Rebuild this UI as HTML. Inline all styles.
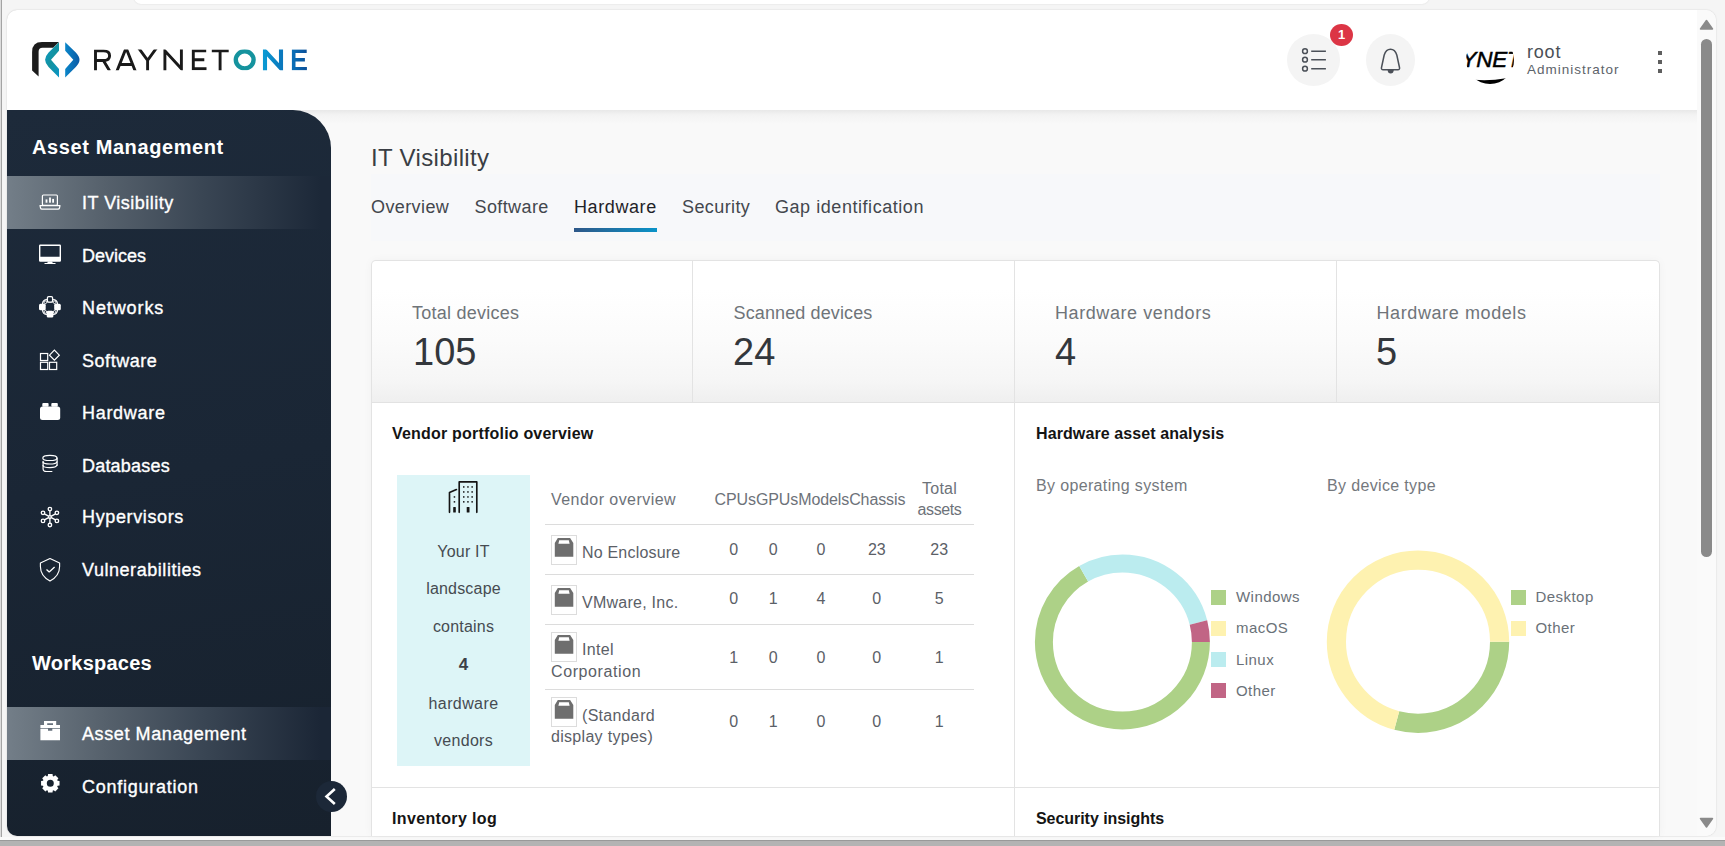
<!DOCTYPE html>
<html><head><meta charset="utf-8">
<style>
*{box-sizing:border-box;margin:0;padding:0}
html,body{width:1725px;height:846px;overflow:hidden}
body{position:relative;background:#f5f5f5;font-family:"Liberation Sans",sans-serif;color:#3b3f45}
.a{position:absolute}
.t{position:absolute;white-space:nowrap}
.sb .t{color:#fff;font-size:18px;line-height:18px;left:82px;letter-spacing:.35px;-webkit-text-stroke:.35px #fff}
.sb .h{font-weight:700;font-size:20px;line-height:20px;left:32px;letter-spacing:.6px;-webkit-text-stroke:0}
.sb svg{position:absolute}
.tab{font-size:18px;line-height:18px;top:198px;color:#43474d;letter-spacing:.4px}
.lbl{font-size:18px;line-height:18px;color:#6f7479;top:304px;letter-spacing:.25px}
.num{font-size:38px;line-height:38px;color:#33373c;top:333px}
.ct{font-size:16px;line-height:16px;font-weight:700;color:#141414;letter-spacing:.2px}
.sub{font-size:16px;line-height:16px;color:#74787d;letter-spacing:.35px}
.td{font-size:16px;line-height:16px;color:#5b6067;letter-spacing:.2px}
.dg{font-size:16px;line-height:16px;color:#5b6067;text-align:center;width:40px}
.lg{font-size:15px;line-height:15px;color:#6a7178;letter-spacing:.45px}
.sq{position:absolute;width:15px;height:15px}
.bx{left:397px;width:133px;text-align:center;color:#464b51}
</style></head><body>
<!-- browser chrome bits -->
<div class="a" style="left:0;top:0;width:1px;height:846px;background:#dcdcdc"></div>
<div class="a" style="left:1px;top:0;width:1px;height:846px;background:#a4a4a4"></div>
<div class="a" style="left:134px;top:-10px;width:1295px;height:14px;background:#fff;border-radius:9px;box-shadow:0 0 2px rgba(0,0,0,.12)"></div>
<div class="a" style="left:0;top:837px;width:1725px;height:3px;background:#fafafa"></div><div class="a" style="left:0;top:840px;width:1725px;height:1px;background:#9a9a9a"></div><div class="a" style="left:0;top:841px;width:1725px;height:5px;background:#b3b3b3"></div>
<!-- card -->
<div class="a" style="left:7px;top:10px;width:1709px;height:826px;background:#fff;border-radius:10px;box-shadow:0 0 1.5px rgba(0,0,0,.22)"></div>
<!-- main bg -->
<div class="a" style="left:7px;top:110px;width:1690px;height:726px;background:#f9f9f9;border-bottom-left-radius:10px"></div>
<div class="a" style="left:7px;top:110px;width:1690px;height:14px;background:linear-gradient(#e8e8e8,#f3f3f3 35%,#f9f9f9)"></div>
<div class="a" style="left:371px;top:174px;width:1289px;height:67px;background:#f7f8fa"></div>
<!-- scrollbar -->
<div class="a" style="left:1697px;top:10px;width:19px;height:826px;background:#fafafa;border-radius:0 10px 10px 0"></div>
<div class="a" style="left:1701px;top:39px;width:11px;height:518px;background:#8a8a8a;border-radius:6px"></div>
<svg class="a" style="left:1697px;top:15px" width="19" height="20"><path d="M3.5 14 L9.5 5.5 L15.5 14 Z" fill="#8a8a8a" stroke="#8a8a8a" stroke-width="1.5" stroke-linejoin="round"/></svg>
<svg class="a" style="left:1697px;top:813px" width="19" height="20"><path d="M3.5 5.5 L9.5 14 L15.5 5.5 Z" fill="#8a8a8a" stroke="#8a8a8a" stroke-width="1.5" stroke-linejoin="round"/></svg>

<!-- HEADER -->
<svg class="a" style="left:25px;top:35px" width="60" height="50" viewBox="0 0 60 50">
<defs><linearGradient id="gT" x1="0" y1="0" x2="1" y2="1"><stop offset="0" stop-color="#0b9bc9"/><stop offset=".5" stop-color="#13929f"/><stop offset="1" stop-color="#0a96c8"/></linearGradient>
<linearGradient id="gB" x1="0" y1="0" x2="1" y2="0"><stop offset="0" stop-color="#0a86c9"/><stop offset="1" stop-color="#0b5aa5"/></linearGradient></defs>
<path d="M7.1 35.5 L7.1 17 Q7.1 7.1 17 7.1 L34 7.1 L28.2 12.7 L17.5 12.7 Q13.6 12.7 13.6 16.8 L13.6 41.4 Z" fill="#1c1c1c"/>
<path d="M34 7.3 L34 15.7 L26 24.8 L34 34 L34 42.6 L23.6 31.9 Q20.1 28.4 20.1 24.8 Q20.1 21.2 23.6 17.4 Z" fill="url(#gT)"/>
<path d="M40.2 7.3 L40.2 15.7 L48.3 24.8 L40.2 34 L40.2 42.6 L50.8 31.9 Q54.5 28.4 54.5 24.8 Q54.5 21.2 50.8 17.4 Z" fill="url(#gB)"/>
</svg>
<svg class="a" style="left:85px;top:40px" width="230" height="40" viewBox="85 40 230 40">
<defs><clipPath id="cp"><rect x="85" y="49.4" width="230" height="20.8"/></clipPath>
<linearGradient id="gN" x1="0" y1="0" x2="1" y2="0"><stop offset="0" stop-color="#0a98d2"/><stop offset="1" stop-color="#0a78bd"/></linearGradient>
<linearGradient id="gE" x1="0" y1="0" x2="1" y2="0"><stop offset="0" stop-color="#0a6db6"/><stop offset="1" stop-color="#0b4f98"/></linearGradient></defs>
<g clip-path="url(#cp)" fill="none" stroke="#1a1a1a" stroke-width="2.9" stroke-linejoin="miter">
<path d="M95.5 72 L95.5 50.85 L103.5 50.85 Q109.6 50.85 109.6 55.7 Q109.6 60.5 103.5 60.5 L95.5 60.5 M103.4 60.5 L109.7 71"/>
<path d="M116.6 72 L126.1 48 L135.6 72 M119.5 64.5 L132.6 64.5"/>
<path d="M138.6 48 L147.6 60.3 L156.5 48 M147.6 60 L147.6 72"/>
<path d="M164.9 72 L164.9 50.85 L181.4 68.8 L181.4 48"/>
<path d="M206.2 50.85 L193.3 50.85 L193.3 68.75 L206.5 68.75 M193.3 59.8 L204.3 59.8"/>
<path d="M211.8 50.85 L228.7 50.85 M220.1 50.85 L220.1 72"/>
</g>
<g clip-path="url(#cp)" fill="none" stroke-linejoin="miter">
<ellipse cx="244.7" cy="59.85" rx="8.9" ry="8.55" stroke="#15939e" stroke-width="4.4"/>
<path d="M265 72 L265 51 L281 68.5 L281 48" stroke="url(#gN)" stroke-width="4.1"/>
<path d="M306.7 51.1 L293.7 51.1 L293.7 68.7 L306.9 68.7 M293.7 59.7 L304.9 59.7" stroke="url(#gE)" stroke-width="3.6"/>
</g></svg>
<div class="a" style="left:1287px;top:34px;width:53px;height:52px;border-radius:50%;background:#f4f4f4"></div>
<svg class="a" style="left:1287px;top:34px" width="53" height="52"><g fill="none" stroke="#4b5058"><circle cx="18" cy="17.2" r="2.4" stroke-width="1.5"/><circle cx="18" cy="25.7" r="2.4" stroke-width="1.5"/><circle cx="18" cy="34.7" r="2.4" stroke-width="1.5"/><path d="M24.2 17.2 H38.9 M24.2 25.7 H38.9 M24.2 34.7 H38.9" stroke-width="1.6"/></g></svg>
<div class="a" style="left:1330px;top:24px;width:23px;height:22px;border-radius:50%;background:#dc3545"></div>
<div class="t" style="left:1330px;top:28px;width:23px;text-align:center;color:#fff;font-weight:700;font-size:13px;line-height:13px">1</div>
<div class="a" style="left:1366px;top:34px;width:49px;height:52px;border-radius:50%;background:#f4f4f4"></div>
<svg class="a" style="left:1366px;top:34px" width="49" height="52"><path d="M15.5 33.5 L18.2 21 Q20 15.3 24.5 15.3 Q29 15.3 30.8 21 L33.5 33.5 Q34 35.7 31.8 35.7 L17.2 35.7 Q15 35.7 15.5 33.5 Z" fill="none" stroke="#4b5058" stroke-width="1.5" stroke-linejoin="round"/><path d="M21.6 36 Q21.9 39.5 24.7 39.5 Q27.5 39.5 27.8 36 Z" fill="#4b5058"/></svg>
<svg class="a" style="left:1466px;top:36px" width="48" height="48" viewBox="0 0 48 48"><defs><clipPath id="av"><circle cx="24" cy="24" r="24"/></clipPath></defs>
<g clip-path="url(#av)"><rect width="48" height="48" fill="#fff"/>
<text x="-4.6" y="30.9" font-family="Liberation Sans" font-weight="400" font-style="italic" font-size="22.5" fill="#000" stroke="#000" stroke-width="0.5" letter-spacing="-.2">YNET</text>
<path d="M8 43.8 Q24 45.2 40 42.2 L40 50 L8 50 Z" fill="#000"/></g></svg>
<div class="t" style="left:1527px;top:43px;font-size:18px;line-height:18px;color:#4a4f56;letter-spacing:.8px">root</div>
<div class="t" style="left:1527px;top:63.3px;font-size:13.5px;line-height:13.5px;color:#5d636a;letter-spacing:1px">Administrator</div>
<div class="a" style="left:1658px;top:51px;width:4px;height:4px;background:#5e5e5e"></div>
<div class="a" style="left:1658px;top:60px;width:4px;height:4px;background:#5e5e5e"></div>
<div class="a" style="left:1658px;top:69px;width:4px;height:4px;background:#5e5e5e"></div>


<!-- SIDEBAR -->
<div class="sb">
<div class="a" style="left:7px;top:110px;width:324px;height:726px;background:linear-gradient(170deg,#1d2a3a 0%,#1a2635 50%,#17212d 100%);border-top-right-radius:38px;border-bottom-left-radius:10px"></div>
<div class="a" style="left:7px;top:176px;width:324px;height:53px;background:linear-gradient(90deg,#737e88 0%,#56616c 30%,#3a4654 60%,#1c2838 97%)"></div>
<div class="a" style="left:7px;top:707px;width:324px;height:53px;background:linear-gradient(90deg,#737e88 0%,#56616c 30%,#3a4654 60%,#1b2636 97%)"></div>

<svg class="a" style="left:0;top:0;pointer-events:none" width="340" height="846" viewBox="0 0 340 846">
<g fill="none" stroke="#fff" stroke-width="1.2">
<!-- laptop -->
<rect x="42.4" y="195" width="15" height="10.3" rx="1"/>
<path d="M40 205.6 H60 L59.5 208 Q59.2 209.2 58 209.2 H42 Q40.8 209.2 40.5 208 Z" stroke-linejoin="round"/>
</g>
<g fill="#fff"><rect x="45.6" y="199.4" width="1.8" height="3.3"/><rect x="49.1" y="197.5" width="1.8" height="5.2"/><rect x="52.2" y="198.9" width="1.8" height="3.8"/></g>
<!-- monitor -->
<path d="M39 245.8 Q39 244.6 40.2 244.6 H59.8 Q61 244.6 61 245.8 V260.5 Q61 261.7 59.8 261.7 H40.2 Q39 261.7 39 260.5 Z M40.4 246 V256.7 H59.6 V246 Z" fill="#fff" fill-rule="evenodd"/>
<path d="M48 261.5 L47.2 263 H44.5 V264 H55.5 V263 H52.8 L52 261.5 Z" fill="#fff"/>
<!-- network -->
<rect x="42.6" y="299.6" width="14.8" height="14.8" rx="4.2" fill="none" stroke="#fff" stroke-width="1.3"/>
<g fill="none" stroke="rgba(255,255,255,.45)" stroke-width=".8"><rect x="45.5" y="302.5" width="9" height="9"/></g>
<g fill="#1b2837" stroke="#fff" stroke-width=".9"><circle cx="45.4" cy="302.3" r="1.3"/><circle cx="54.6" cy="302.3" r="1.3"/><circle cx="45.4" cy="311.9" r="1.3"/><circle cx="54.6" cy="311.9" r="1.3"/></g>
<rect x="47.4" y="296.7" width="5.2" height="5.4" rx="1.3" fill="#1b2837" stroke="#fff" stroke-width="1.3"/>
<rect x="39" y="303.7" width="6.5" height="6.5" rx="1.5" fill="#fff"/>
<rect x="54.3" y="303.7" width="6.5" height="6.5" rx="1.5" fill="#fff"/>
<rect x="46.7" y="310.8" width="6.7" height="6.7" rx="1.5" fill="#fff"/>
<!-- software -->
<g fill="none" stroke="#fff" stroke-width="1.2">
<rect x="40.5" y="353.5" width="7.2" height="7"/><rect x="40.5" y="362.3" width="7.2" height="7.2"/><rect x="49.5" y="362.3" width="7.2" height="7.2"/>
<path d="M54.4 350.2 L59.3 355.2 L54.4 360.1 L49.5 355.2 Z"/></g>
<!-- hardware -->
<rect x="40" y="406.5" width="20.2" height="13.5" rx="2.5" fill="#fff"/>
<rect x="42.3" y="403" width="6.3" height="3.8" rx="1" fill="#fff"/><rect x="51.3" y="403" width="6.5" height="3.8" rx="1" fill="#fff"/>
<!-- database -->
<g fill="none" stroke="#fff" stroke-width="1.2" stroke-linecap="round">
<ellipse cx="49.9" cy="457.9" rx="7.1" ry="2.6"/>
<path d="M57.1 458 V465.3"/>
<path d="M43 462 Q43.5 464 49.9 464 Q56.3 464 56.9 461.8"/>
<path d="M43 465.6 Q43.5 467.6 49.9 467.6 Q56.3 467.6 56.9 465.2"/>
<path d="M43.1 461.3 V469 Q43.1 471.5 46.5 471.5 H51.9"/>
</g>
<!-- hypervisor -->
<g fill="none" stroke="#fff" stroke-width="1.35">
<path d="M49.9 510.8 V523.2 M44.4 513.8 L55.5 519.9 M44.4 519.9 L55.5 513.8"/>
<circle cx="49.9" cy="509.1" r="1.75"/><circle cx="49.9" cy="525" r="1.75"/>
<circle cx="43" cy="512.8" r="1.75"/><circle cx="56.9" cy="512.8" r="1.75"/>
<circle cx="43" cy="520.9" r="1.75"/><circle cx="56.9" cy="520.9" r="1.75"/>
<circle cx="49.9" cy="516.9" r="1.3" fill="#1b2837"/>
</g>
<!-- shield -->
<g fill="none" stroke="#fff" stroke-width="1.15" stroke-linejoin="round">
<path d="M50 558.5 L59.6 563.1 V566.5 Q59.6 575.8 50 581.1 Q40.4 575.8 40.4 566.5 V563.1 Z"/>
<path d="M46.5 569.4 L49.2 571.9 L54.6 567" stroke-width="1.3"/></g>
<!-- briefcase -->
<path d="M44 721 H56.2 V725 H53 V723.2 H47.2 V725 H44 Z" fill="#fff"/>
<rect x="40.4" y="725" width="19.6" height="3" fill="#fff"/>
<path d="M40.4 728.7 H48 V730.8 H52.3 V728.7 H60 V740.2 H40.4 Z" fill="#fff"/>
<!-- gear -->
<path fill="#fff" fill-rule="evenodd" d="M47.79 776.02 L48.08 774.06 L52.52 774.06 L52.81 776.02 A7.7 7.7 0 0 1 53.68 776.38 L55.26 775.20 L58.40 778.34 L57.22 779.92 A7.7 7.7 0 0 1 57.58 780.79 L59.54 781.08 L59.54 785.52 L57.58 785.81 A7.7 7.7 0 0 1 57.22 786.68 L58.40 788.26 L55.26 791.40 L53.68 790.22 A7.7 7.7 0 0 1 52.81 790.58 L52.52 792.54 L48.08 792.54 L47.79 790.58 A7.7 7.7 0 0 1 46.92 790.22 L45.34 791.40 L42.20 788.26 L43.38 786.68 A7.7 7.7 0 0 1 43.02 785.81 L41.06 785.52 L41.06 781.08 L43.02 780.79 A7.7 7.7 0 0 1 43.38 779.92 L42.20 778.34 L45.34 775.20 L46.92 776.38 A7.7 7.7 0 0 1 47.79 776.02 Z M53.80 783.30 A3.5 3.5 0 1 0 46.80 783.30 A3.5 3.5 0 1 0 53.80 783.30 Z"/>
</svg>
<div class="t h" style="top:137px">Asset Management</div>
<div class="t" style="top:194px;letter-spacing:.5px">IT Visibility</div>
<div class="t" style="top:247px;letter-spacing:0">Devices</div>
<div class="t" style="top:299px;letter-spacing:.9px">Networks</div>
<div class="t" style="top:352px;letter-spacing:.55px">Software</div>
<div class="t" style="top:404px;letter-spacing:.7px">Hardware</div>
<div class="t" style="top:457px;letter-spacing:.2px">Databases</div>
<div class="t" style="top:508px;letter-spacing:.63px">Hypervisors</div>
<div class="t" style="top:561px;letter-spacing:.55px">Vulnerabilities</div>
<div class="t h" style="top:653px;letter-spacing:.25px">Workspaces</div>
<div class="t" style="top:725px;letter-spacing:.6px">Asset Management</div>
<div class="t" style="top:778px;letter-spacing:.75px">Configuration</div>
<div class="a" style="left:316px;top:781px;width:31px;height:31px;border-radius:50%;background:#1c2838"></div>
<svg class="a" style="left:316px;top:781px" width="31" height="31"><path d="M18.8 8 L10.5 15.5 L18.8 23" fill="none" stroke="#fff" stroke-width="2.6"/></svg>
</div>

<!-- MAIN -->
<div class="t" style="left:371px;top:146px;font-size:24px;line-height:24px;color:#3a3e44;letter-spacing:.35px">IT Visibility</div>
<div class="t tab" style="left:371px">Overview</div>
<div class="t tab" style="left:474.5px">Software</div>
<div class="t tab" style="left:574px;color:#1f2328;letter-spacing:.6px">Hardware</div>
<div class="t tab" style="left:682px">Security</div>
<div class="t tab" style="left:775px;letter-spacing:.55px">Gap identification</div>
<div class="a" style="left:574px;top:228px;width:83px;height:4px;background:linear-gradient(90deg,#2e5788,#0a93c8)"></div>

<!-- stats -->
<div class="a" style="left:371px;top:260px;width:1289px;height:576px;background:#fff;border:1px solid #e3e3e3;border-bottom:none;border-radius:5px 5px 0 0;box-shadow:0 0 10px rgba(0,0,0,.035)"></div>
<div class="a" style="left:372px;top:290px;width:1287px;height:112px;background:linear-gradient(#fff,#fbfbfb 45%,#f6f6f6 80%,#efefef)"></div>
<div class="a" style="left:372px;top:402px;width:1287px;height:1px;background:#e2e2e2"></div>
<div class="a" style="left:692px;top:261px;width:1px;height:141px;background:#e3e3e3"></div>
<div class="a" style="left:1014px;top:261px;width:1px;height:575px;background:#e3e3e3"></div>
<div class="a" style="left:1336px;top:261px;width:1px;height:141px;background:#e3e3e3"></div>
<div class="t lbl" style="left:412px">Total devices</div>
<div class="t lbl" style="left:733.5px;letter-spacing:.12px">Scanned devices</div>
<div class="t lbl" style="left:1055px;letter-spacing:.58px">Hardware vendors</div>
<div class="t lbl" style="left:1376.5px;letter-spacing:.6px">Hardware models</div>
<div class="t num" style="left:413px">105</div>
<div class="t num" style="left:733px">24</div>
<div class="t num" style="left:1055px">4</div>
<div class="t num" style="left:1376px">5</div>

<!-- vendor portfolio -->
<div class="t ct" style="left:392px;top:426.3px">Vendor portfolio overview</div>
<div class="t ct" style="left:1036px;top:426.3px;letter-spacing:.1px">Hardware asset analysis</div>

<!-- cyan box -->
<div class="a" style="left:397px;top:475px;width:133px;height:291px;background:#ddf5f7"></div>
<svg class="a" style="left:444px;top:477px" width="40" height="40" viewBox="444 477 40 40">
<g fill="none" stroke="#141414" stroke-width="1.65" stroke-linecap="round" stroke-linejoin="round">
<path d="M459.2 512.3 V481.9 H476.8 V512.3"/><path d="M449.5 512.3 V492.6 L456.4 489.6"/></g>
<g fill="#141414">
<rect x="463" y="486.2" width="1.5" height="1.5"/><rect x="467.2" y="486.2" width="1.5" height="1.5"/><rect x="471.4" y="486.2" width="1.5" height="1.5"/>
<rect x="463" y="491.2" width="1.5" height="1.5"/><rect x="467.2" y="491.2" width="1.5" height="1.5"/><rect x="471.4" y="491.2" width="1.5" height="1.5"/>
<rect x="463" y="496.2" width="1.5" height="1.5"/><rect x="467.2" y="496.2" width="1.5" height="1.5"/><rect x="471.4" y="496.2" width="1.5" height="1.5"/>
<rect x="463" y="501.1" width="1.5" height="1.5"/><rect x="467.2" y="501.1" width="1.5" height="1.5"/><rect x="471.4" y="501.1" width="1.5" height="1.5"/>
<rect x="453.7" y="496.2" width="1.5" height="1.5"/><rect x="453.7" y="501.1" width="1.5" height="1.5"/>
<rect x="466.7" y="507" width="2.8" height="5.6" rx=".6"/><rect x="453.2" y="507" width="2.6" height="5.6" rx=".6"/>
</g></svg>
<div class="t td bx" style="top:544px">Your IT</div>
<div class="t td bx" style="top:581.2px">landscape</div>
<div class="t td bx" style="top:618.7px">contains</div>
<div class="t td bx" style="top:657.1px;font-weight:700;color:#3d4147;font-size:17px">4</div>
<div class="t td bx" style="top:695.5px;letter-spacing:.4px">hardware</div>
<div class="t td bx" style="top:733.1px;letter-spacing:.3px">vendors</div>
<!-- table -->
<div class="t sub" style="left:551px;top:491.7px;color:#6d7279;letter-spacing:.45px">Vendor overview</div>
<div class="t sub" style="left:714.5px;top:491.5px;color:#6d7279;letter-spacing:-.1px">CPUsGPUsModelsChassis</div>
<div class="t sub" style="left:904px;width:71px;text-align:center;top:480.5px;color:#6d7279;letter-spacing:.2px">Total</div>
<div class="t sub" style="left:904px;width:71px;text-align:center;top:501.9px;color:#6d7279;letter-spacing:-.4px">assets</div>
<div class="a" style="left:545px;top:524px;width:429px;height:1px;background:#dcdcdc"></div>
<div class="a" style="left:545px;top:574px;width:429px;height:1px;background:#dcdcdc"></div>
<div class="a" style="left:545px;top:624px;width:429px;height:1px;background:#dcdcdc"></div>
<div class="a" style="left:545px;top:689px;width:429px;height:1px;background:#dcdcdc"></div>
<div class="a" style="left:551px;top:535px;width:26px;height:29.5px;border:1px solid #dcdcdc;background:#fff"></div>
<svg class="a" style="left:551px;top:535px" width="26" height="30"><path d="M6.8 3 H19.1 L22.3 7.9 V21.7 H3.8 V7.9 Z M8.2 5.3 H17.8 L18.6 8.7 H7.4 Z" fill="#6e6e6e" fill-rule="evenodd"/></svg>
<div class="a" style="left:551px;top:585px;width:26px;height:29.5px;border:1px solid #dcdcdc;background:#fff"></div>
<svg class="a" style="left:551px;top:585px" width="26" height="30"><path d="M6.8 3 H19.1 L22.3 7.9 V21.7 H3.8 V7.9 Z M8.2 5.3 H17.8 L18.6 8.7 H7.4 Z" fill="#6e6e6e" fill-rule="evenodd"/></svg>
<div class="a" style="left:551px;top:632px;width:26px;height:29.5px;border:1px solid #dcdcdc;background:#fff"></div>
<svg class="a" style="left:551px;top:632px" width="26" height="30"><path d="M6.8 3 H19.1 L22.3 7.9 V21.7 H3.8 V7.9 Z M8.2 5.3 H17.8 L18.6 8.7 H7.4 Z" fill="#6e6e6e" fill-rule="evenodd"/></svg>
<div class="a" style="left:551px;top:697px;width:26px;height:29.5px;border:1px solid #dcdcdc;background:#fff"></div>
<svg class="a" style="left:551px;top:697px" width="26" height="30"><path d="M6.8 3 H19.1 L22.3 7.9 V21.7 H3.8 V7.9 Z M8.2 5.3 H17.8 L18.6 8.7 H7.4 Z" fill="#6e6e6e" fill-rule="evenodd"/></svg>
<div class="t td" style="left:582px;top:544.5px">No Enclosure</div>
<div class="t td" style="left:582px;top:594.5px;letter-spacing:.25px">VMware, Inc.</div>
<div class="t td" style="left:582px;top:641.5px;letter-spacing:.3px">Intel</div>
<div class="t td" style="left:551px;top:663.5px;letter-spacing:.6px">Corporation</div>
<div class="t td" style="left:582px;top:707.5px;letter-spacing:.3px">(Standard</div>
<div class="t td" style="left:551px;top:728.6px;letter-spacing:.3px">display types)</div>
<div class="t dg" style="left:713.6px;top:541.5px">0</div>
<div class="t dg" style="left:753.3px;top:541.5px">0</div>
<div class="t dg" style="left:801px;top:541.5px">0</div>
<div class="t dg" style="left:856.8px;top:541.5px">23</div>
<div class="t dg" style="left:919.2px;top:541.5px">23</div>
<div class="t dg" style="left:713.6px;top:591.2px">0</div>
<div class="t dg" style="left:753.3px;top:591.2px">1</div>
<div class="t dg" style="left:801px;top:591.2px">4</div>
<div class="t dg" style="left:856.8px;top:591.2px">0</div>
<div class="t dg" style="left:919.2px;top:591.2px">5</div>
<div class="t dg" style="left:713.6px;top:649.7px">1</div>
<div class="t dg" style="left:753.3px;top:649.7px">0</div>
<div class="t dg" style="left:801px;top:649.7px">0</div>
<div class="t dg" style="left:856.8px;top:649.7px">0</div>
<div class="t dg" style="left:919.2px;top:649.7px">1</div>
<div class="t dg" style="left:713.6px;top:714.4px">0</div>
<div class="t dg" style="left:753.3px;top:714.4px">1</div>
<div class="t dg" style="left:801px;top:714.4px">0</div>
<div class="t dg" style="left:856.8px;top:714.4px">0</div>
<div class="t dg" style="left:919.2px;top:714.4px">1</div>

<div class="t sub" style="left:1036px;top:477.5px">By operating system</div>
<div class="t sub" style="left:1327px;top:477.5px">By device type</div>
<svg class="a" style="left:0;top:0" width="1725" height="846"><circle cx="1122.4" cy="642" r="78.5" fill="none" stroke="#add187" stroke-width="18" stroke-dasharray="328.820 493.230" stroke-dashoffset="0.000"/><circle cx="1122.4" cy="642" r="78.5" fill="none" stroke="#bbecef" stroke-width="18" stroke-dasharray="143.859 493.230" stroke-dashoffset="-328.820"/><circle cx="1122.4" cy="642" r="78.5" fill="none" stroke="#c16585" stroke-width="18" stroke-dasharray="20.551 493.230" stroke-dashoffset="-472.679"/><circle cx="1418" cy="641.7" r="81.6" fill="none" stroke="#add187" stroke-width="19.2" stroke-dasharray="149.540 512.708" stroke-dashoffset="0.000"/><circle cx="1418" cy="641.7" r="81.6" fill="none" stroke="#fef2b0" stroke-width="19.2" stroke-dasharray="363.168 512.708" stroke-dashoffset="-149.540"/></svg>
<div class="sq" style="left:1211px;top:589.5px;background:#add187"></div>
<div class="sq" style="left:1211px;top:620.8px;background:#fef2b0"></div>
<div class="sq" style="left:1211px;top:652px;background:#bbecef"></div>
<div class="sq" style="left:1211px;top:683.3px;background:#c16585"></div>
<div class="t lg" style="left:1236px;top:589.1px">Windows</div>
<div class="t lg" style="left:1236px;top:620.4px">macOS</div>
<div class="t lg" style="left:1236px;top:651.7px">Linux</div>
<div class="t lg" style="left:1236px;top:683px">Other</div>
<div class="sq" style="left:1511px;top:589.5px;background:#add187"></div>
<div class="sq" style="left:1511px;top:620.6px;background:#fef2b0"></div>
<div class="t lg" style="left:1535.5px;top:589.1px">Desktop</div>
<div class="t lg" style="left:1535.5px;top:620.4px">Other</div>
<div class="a" style="left:372px;top:787px;width:1287px;height:1px;background:#e3e3e3"></div>
<div class="t ct" style="left:392px;top:810.5px;letter-spacing:.35px">Inventory log</div>
<div class="t ct" style="left:1036px;top:810.5px;letter-spacing:-.05px">Security insights</div>

</body></html>
